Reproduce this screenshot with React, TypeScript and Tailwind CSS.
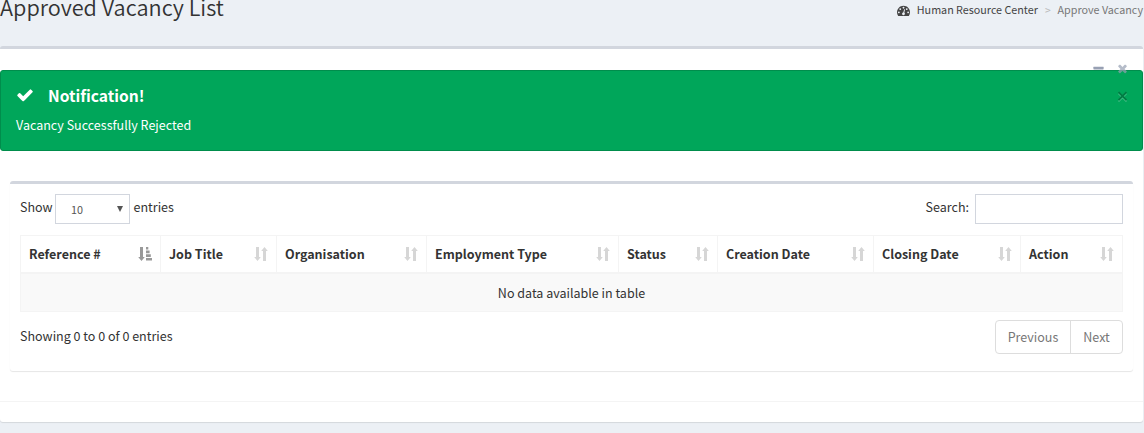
import React from "react";

const PATHS = {
  check:
    "M1671 566q0 40-28 68l-724 724-136 136q-28 28-68 28t-68-28l-136-136-362-362q-28-28-28-68t28-68l136-136q28-28 68-28t68 28l294 295 656-657q28-28 68-28t68 28l136 136q28 28 28 68z",
  times:
    "M1490 1322q0 40-28 68l-136 136q-28 28-68 28t-68-28l-294-294-294 294q-28 28-68 28t-68-28l-136-136q-28-28-28-68t28-68l294-294-294-294q-28-28-28-68t28-68l136-136q28-28 68-28t68 28l294 294 294-294q28-28 68-28t68 28l136 136q28 28 28 68t-28 68l-294 294 294 294q28 28 28 68z",
  minus:
    "M1600 736v192q0 40-28 68t-68 28h-1216q-40 0-68-28t-28-68v-192q0-40 28-68t68-28h1216q40 0 68 28t28 68z",
  dashboard:
    "M384 1152q0-53-37.5-90.5t-90.5-37.5-90.5 37.5-37.5 90.5 37.5 90.5 90.5 37.5 90.5-37.5 37.5-90.5zm192-448q0-53-37.5-90.5t-90.5-37.5-90.5 37.5-37.5 90.5 37.5 90.5 90.5 37.5 90.5-37.5 37.5-90.5zm428 481l101-382q6-26-7.5-48.5t-38.5-29.5-48 6.5-30 39.5l-101 382q-60 5-107 43.5t-63 98.5q-20 77 20 146t117 89 146-20 89-117q16-60-6-117t-72-91zm660-33q0-53-37.5-90.5t-90.5-37.5-90.5 37.5-37.5 90.5 37.5 90.5 90.5 37.5 90.5-37.5 37.5-90.5zm-640-640q0-53-37.5-90.5t-90.5-37.5-90.5 37.5-37.5 90.5 37.5 90.5 90.5 37.5 90.5-37.5 37.5-90.5zm448 192q0-53-37.5-90.5t-90.5-37.5-90.5 37.5-37.5 90.5 37.5 90.5 90.5 37.5 90.5-37.5 37.5-90.5zm320 448q0 261-141 483-19 29-54 29h-1402q-35 0-54-29-141-221-141-483 0-182 71-348t191-286 286-191 348-71 348 71 286 191 191 286 71 348z",
};

function Icon({ name, className }: { name: keyof typeof PATHS; className: string }) {
  return (
    <svg viewBox="0 0 1792 1792" fill="currentColor" className={className}>
      <path d={PATHS[name]} />
    </svg>
  );
}

function SortIcon({ active }: { active?: boolean }) {
  return active ? (
    <svg width="14" height="14" viewBox="0 0 14 14" fill="currentColor" className="shrink-0 text-[#999]">
      <path d="M2 0h3v10H6.8L3.5 14 .2 10H2zM8 0h2.3v2.6H8zM8 3.6h3.6v2.6H8zM8 7.3h4.8v2.6H8zM8 11h6v2.6H8z" />
    </svg>
  ) : (
    <svg width="14" height="14" viewBox="0 0 14 14" fill="currentColor" className="shrink-0 text-[#d6d6d6]">
      <path d="M2 0h3v10H6.8L3.5 14 .2 10H2zM9 14h3V4h1.8L10.5 0 7.2 4H9z" />
    </svg>
  );
}

const COLUMNS = [
  { label: "Reference #", width: "w-[140px]", active: true },
  { label: "Job Title", width: "w-[116px]" },
  { label: "Organisation", width: "w-[150px]" },
  { label: "Employment Type", width: "w-[192px]" },
  { label: "Status", width: "w-[99px]" },
  { label: "Creation Date", width: "w-[156px]" },
  { label: "Closing Date", width: "w-[147px]" },
  { label: "Action", width: "w-[101px]" },
];

export default function App() {
  return (
    <div className="h-[433px] w-full overflow-hidden bg-[#ecf0f5] font-['Noto_Sans_CJK_SC',sans-serif] text-[12.53px] leading-5 text-[#333]">
      <header className="flex h-[46px] justify-between">
        <h1 className="-mt-[5px] text-[21.7px] leading-6 font-[350]">Approved Vacancy List</h1>
        <nav className="flex h-5 items-center pr-px text-[10.75px] text-[#444]">
          <Icon name="dashboard" className="mr-[7px] size-[13px]" />
          <span>Human Resource Center</span>
          <span className="mr-[7px] ml-[7px] text-[10px] font-medium text-[#bbb]">&gt;</span>
          <span className="text-[#777]">Approve Vacancy</span>
        </nav>
      </header>

      <section className="h-[376px] w-[1143px] rounded-[3px] border-t-[3px] border-[#d2d6de] bg-white shadow-[0_1px_1px_rgba(0,0,0,0.1)]">
        <div className="relative z-10 flex h-[21px] items-end justify-end pr-[14px] text-[#97a0b3]">
          <Icon name="minus" className="mr-[11px] -mb-[5px] size-[13px]" />
          <Icon name="times" className="-mb-[5px] size-[13px] opacity-70" />
        </div>

        <div className="h-[81px] rounded-[3px] border border-[#008d4c] bg-[#00a65a] pt-[14px] pr-[14px] pl-[15px] text-white">
          <div className="flex h-[20px] items-center">
            <Icon name="check" className="mr-[14px] size-[18px]" />
            <h4 className="text-[15.6px] font-bold">Notification!</h4>
            <svg width="11" height="11" viewBox="0 0 11 11" fill="none" className="ml-auto mt-[2px] opacity-25">
              <path d="M1.5 2.5l8 8M9.5 2.5l-8 8" stroke="#fff" strokeWidth="1.6" />
              <path d="M1.5 1.2l8 8M9.5 1.2l-8 8" stroke="#000" strokeWidth="1.8" />
            </svg>
          </div>
          <p className="mt-[10px]">Vacancy Successfully Rejected</p>
        </div>

        <div className="mx-[10px] mt-[30px] h-[190px] rounded-[3px] border-t-[3px] border-[#d2d6de] px-[10px] pt-[10px] shadow-[0_1px_1px_rgba(0,0,0,0.1)]">
          <div className="flex h-[30px] justify-between">
            <div className="flex">
              <span className="mt-[3px] w-[35px]">Show</span>
              <div className="flex h-[30px] w-[75px] items-center justify-between border border-[#d2d6de] pr-[6px] pl-[15px] text-[10.8px] text-[#555]">
                <span>10</span>
                <svg width="6" height="6" viewBox="0 0 6 6" fill="currentColor">
                  <path d="M0 0h6L3 6z" />
                </svg>
              </div>
              <span className="mt-[3px] ml-[3.5px]">entries</span>
            </div>
            <label className="flex">
              <span className="mt-[3px] mr-[6px]">Search:</span>
              <input className="h-[30px] w-[148px] border border-[#d2d6de] bg-white outline-none" />
            </label>
          </div>

          <div className="mt-[11px] w-[1103px] border border-[#f4f4f4]">
            <div className="flex h-[36px]">
              {COLUMNS.map((c) => (
                <div
                  key={c.label}
                  className={`flex shrink-0 items-center justify-between border-r border-[#f4f4f4] pr-2 pl-2 font-bold last:border-r-0 ${c.width}`}
                >
                  <span className="whitespace-nowrap">{c.label}</span>
                  <SortIcon active={c.active} />
                </div>
              ))}
            </div>
            <div className="flex h-[39px] items-center justify-center border-t-2 border-[#f4f4f4] bg-[#f9f9f9]">
              No data available in table
            </div>
          </div>

          <div className="flex justify-between pt-2">
            <span className="mt-[6px]">Showing 0 to 0 of 0 entries</span>
            <div className="flex h-[34px] rounded-[4px] border border-[#ddd] text-[#777]">
              <span className="flex w-[75px] items-center justify-center border-r border-[#ddd]">Previous</span>
              <span className="flex w-[51px] items-center justify-center">Next</span>
            </div>
          </div>
        </div>
        <div className="mt-[30px] border-t border-[#f4f4f4]" />
      </section>
    </div>
  );
}
